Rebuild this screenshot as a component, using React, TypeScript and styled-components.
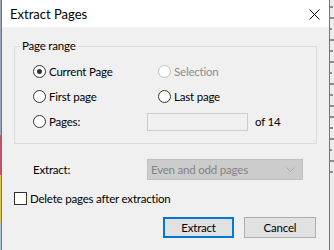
import React from "react";
import styled, { createGlobalStyle } from "styled-components";

const GlobalStyle = createGlobalStyle`
  html, body {
    margin: 0;
    padding: 0;
    overflow: hidden;
  }
  body {
    font-family: "Segoe UI", Lato, "Noto Sans", sans-serif;
    font-size: 11.5px;
    letter-spacing: -0.2px;
    color: #000;
  }
`;

const Screen = styled.div`
  display: flex;
  width: 334px;
  height: 250px;
  overflow: hidden;
  background: #e9e9e9;
`;

const LeftEdge = styled.div`
  width: 1px;
  background: linear-gradient(
    to bottom,
    #9aa6b8 0px,
    #9aa6b8 135px,
    #c9506a 135px,
    #c9506a 175px,
    #e2c84a 175px,
    #e2c84a 222px,
    #b8c4d8 222px
  );
`;

const RightEdge = styled.div`
  flex: 1;
  display: flex;
  flex-direction: column;
  gap: 9px;
  padding-top: 6px;
  background: #ececec;
`;

const DocMark = styled.div<{ $w: number }>`
  width: ${(p) => p.$w}px;
  height: 2px;
  background: #8d8d8d;
`;

const Dialog = styled.div`
  width: 327px;
  border-left: 1px solid #3a82d0;
  border-right: 1px solid #3a82d0;
  background: #f0f0f0;
  display: flex;
  flex-direction: column;
`;

const TitleBar = styled.div`
  height: 27px;
  background: #fff;
  display: flex;
  align-items: center;
  justify-content: space-between;
  padding: 0 9px 0 8px;
  font-size: 13px;
  letter-spacing: 0;
`;

const CloseX = styled.svg`
  width: 11px;
  height: 11px;
  margin-top: 1px;
`;

const Body = styled.div`
  padding: 11px 12px 0 12px;
  display: flex;
  flex-direction: column;
`;

const Group = styled.fieldset`
  margin: 0;
  width: 303px;
  box-sizing: border-box;
  border: 1px solid #dcdcdc;
  padding: 5px 0 9px 5px;
  display: flex;
  flex-direction: column;
`;

const GroupLabel = styled.legend`
  padding: 0 2px;
  line-height: 16px;
`;

const Row = styled.div`
  display: flex;
  align-items: center;
  height: 25px;
  padding-left: 13px;
`;

const Cell = styled.div<{ $w?: number }>`
  display: flex;
  align-items: center;
  width: ${(p) => (p.$w ? `${p.$w}px` : "auto")};
  flex-shrink: 0;
`;

const RadioLabel = styled.label<{ $disabled?: boolean }>`
  display: flex;
  align-items: center;
  gap: 3px;
  color: ${(p) => (p.$disabled ? "#8c8c8c" : "#000")};
`;

const RadioCircle = styled.span<{ $checked?: boolean; $disabled?: boolean }>`
  position: relative;
  width: 13px;
  height: 13px;
  box-sizing: border-box;
  border-radius: 50%;
  border: 1px solid ${(p) => (p.$disabled ? "#c2c2c2" : "#333")};
  background: #fff;
  &::after {
    content: "";
    display: ${(p) => (p.$checked ? "block" : "none")};
    position: absolute;
    left: 3px;
    top: 3px;
    width: 5px;
    height: 5px;
    border-radius: 50%;
    background: #333;
  }
`;

const TextField = styled.div`
  width: 101px;
  height: 18px;
  box-sizing: border-box;
  border: 1px solid #cccccc;
  background: #f0f0f0;
`;

const OfText = styled.span`
  margin-left: 7px;
`;

const ExtractRow = styled.div`
  display: flex;
  align-items: center;
  margin-top: 15px;
  padding-left: 19px;
`;

const Select = styled.div`
  width: 156px;
  height: 21px;
  box-sizing: border-box;
  border: 1px solid #bfbfbf;
  background: #cccccc;
  color: #838383;
  display: flex;
  align-items: center;
  justify-content: space-between;
  padding: 0 7px 0 3px;
`;

const Chevron = styled.svg`
  width: 9px;
  height: 5px;
`;

const CheckRow = styled.label`
  display: flex;
  align-items: center;
  gap: 3px;
  margin-top: 10px;
  height: 16px;
`;

const CheckBox = styled.span`
  width: 13px;
  height: 13px;
  box-sizing: border-box;
  border: 1px solid #333;
  background: #fff;
`;

const ButtonRow = styled.div`
  display: flex;
  justify-content: flex-end;
  gap: 10px;
  margin-top: 11px;
  padding-right: 1px;
`;

const Button = styled.button<{ $default?: boolean }>`
  width: ${(p) => (p.$default ? 71 : 72)}px;
  height: 21px;
  box-sizing: border-box;
  border: ${(p) => (p.$default ? "2px solid #0078d7" : "1px solid #adadad")};
  background: #e1e1e1;
  font: inherit;
  letter-spacing: inherit;
  color: #000;
  padding: 0;
`;

export default function App() {
  return (
    <>
      <GlobalStyle />
      <Screen>
        <LeftEdge />
        <Dialog>
          <TitleBar>
            <span>Extract Pages</span>
            <CloseX viewBox="0 0 11 11">
              <path d="M0.5 0.5 L10.5 10.5 M10.5 0.5 L0.5 10.5" stroke="#000" strokeWidth="1" fill="none" />
            </CloseX>
          </TitleBar>
          <Body>
            <Group>
              <GroupLabel>Page range</GroupLabel>
              <Row>
                <Cell $w={125}>
                  <RadioLabel>
                    <RadioCircle $checked />
                    Current Page
                  </RadioLabel>
                </Cell>
                <Cell>
                  <RadioLabel $disabled>
                    <RadioCircle $disabled />
                    Selection
                  </RadioLabel>
                </Cell>
              </Row>
              <Row>
                <Cell $w={125}>
                  <RadioLabel>
                    <RadioCircle />
                    First page
                  </RadioLabel>
                </Cell>
                <Cell>
                  <RadioLabel>
                    <RadioCircle />
                    Last page
                  </RadioLabel>
                </Cell>
              </Row>
              <Row>
                <Cell $w={114}>
                  <RadioLabel>
                    <RadioCircle />
                    Pages:
                  </RadioLabel>
                </Cell>
                <TextField />
                <OfText>of 14</OfText>
              </Row>
            </Group>
            <ExtractRow>
              <Cell $w={114}>Extract:</Cell>
              <Select>
                <span>Even and odd pages</span>
                <Chevron viewBox="0 0 9 5">
                  <path d="M0.5 0.5 L4.5 4.5 L8.5 0.5" stroke="#a8a8a8" strokeWidth="1" fill="none" />
                </Chevron>
              </Select>
            </ExtractRow>
            <CheckRow>
              <CheckBox />
              Delete pages after extraction
            </CheckRow>
            <ButtonRow>
              <Button $default>Extract</Button>
              <Button>Cancel</Button>
            </ButtonRow>
          </Body>
        </Dialog>
        <RightEdge>
          <DocMark $w={3} />
          <DocMark $w={4} />
          <DocMark $w={2} />
          <DocMark $w={4} />
          <DocMark $w={3} />
          <DocMark $w={4} />
          <DocMark $w={2} />
          <DocMark $w={4} />
          <DocMark $w={3} />
          <DocMark $w={4} />
          <DocMark $w={4} />
          <DocMark $w={3} />
          <DocMark $w={4} />
          <DocMark $w={2} />
          <DocMark $w={4} />
          <DocMark $w={3} />
        </RightEdge>
      </Screen>
    </>
  );
}
